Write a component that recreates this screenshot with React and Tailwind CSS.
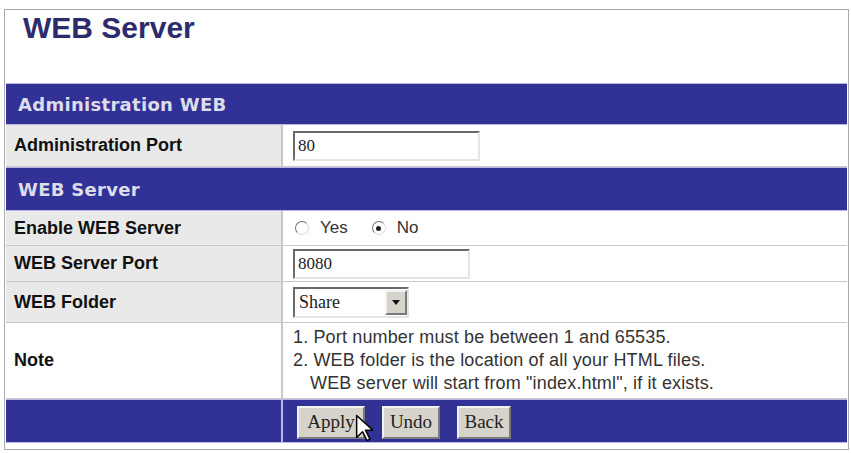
import { useState } from "react";

const sans = { fontFamily: '"Liberation Sans", Arial, sans-serif' };
const wide = { fontFamily: '"DejaVu Sans", Verdana, sans-serif' };
const serif = { fontFamily: '"Liberation Serif", "Times New Roman", serif' };

const Bar = ({ title, h }) => (
  <div
    className={`${h} bg-[#323296] border-y border-[#b8b8e0] flex items-center pl-[12px] text-[18px] font-bold text-[#dcdcea] tracking-[0.3px]`}
    style={wide}
  >
    {title}
  </div>
);

const Row = ({ label, h, white, children }) => (
  <div className={`${h} grid grid-cols-[277px_1fr] border-b border-[#c8c8c8]`}>
    <div
      className={`${white ? "bg-white" : "bg-[#e9e9e9]"} border-r-2 border-[#c8c8c8] flex items-center pl-[8px] text-[18px] font-bold text-[#111]`}
      style={sans}
    >
      {label}
    </div>
    <div className="bg-white flex items-center pl-[10px]">{children}</div>
  </div>
);

const TextBox = ({ value, w }) => (
  <div
    className={`${w} h-[30px] bg-white border-2 border-t-[#6a6a6a] border-l-[#6a6a6a] border-b-[#e4e4e4] border-r-[#e4e4e4] flex items-center pl-[3px] text-[17px] text-[#222]`}
    style={serif}
  >
    {value}
  </div>
);

const Radio = ({ checked, label }) => (
  <label className="flex items-center gap-[11px] text-[17px] text-[#333]" style={sans}>
    <span className="w-[14px] h-[14px] rounded-full border border-t-[#777] border-l-[#777] border-b-[#ddd] border-r-[#ddd] bg-white flex items-center justify-center">
      {checked && <span className="w-[5px] h-[5px] rounded-full bg-[#222]" />}
    </span>
    {label}
  </label>
);

const Btn = ({ children, w }) => (
  <button
    className={`${w} h-[33px] bg-[#d6d3cb] border-2 border-t-[#f2f2f2] border-l-[#f2f2f2] border-b-[#7a7a7a] border-r-[#7a7a7a] text-[19px] text-[#222] flex items-center justify-center`}
    style={serif}
  >
    {children}
  </button>
);

export default function App() {
  const [enabled, setEnabled] = useState(false);

  return (
    <div className="w-[851px] h-[453px] bg-white pt-[9px] pl-[4px]">
      <div className="w-[845px] h-[441px] border border-[#a8a8a8] px-[1px] flex flex-col">
        <div className="h-[73px] pl-[17px] pt-[1px]">
          <h1 className="text-[30px] font-bold text-[#2c2c6c] leading-[34px]" style={sans}>
            WEB Server
          </h1>
        </div>

        <Bar title="Administration WEB" h="h-[42px]" />
        <Row label="Administration Port" h="h-[42px]">
          <TextBox value="80" w="w-[187px]" />
        </Row>

        <Bar title="WEB Server" h="h-[44px]" />
        <Row label="Enable WEB Server" h="h-[35px]">
          <div className="flex items-center gap-[24px] pl-[2px]" onClick={() => setEnabled(!enabled)}>
            <Radio checked={enabled} label="Yes" />
            <Radio checked={!enabled} label="No" />
          </div>
        </Row>
        <Row label="WEB Server Port" h="h-[36px]">
          <TextBox value="8080" w="w-[177px]" />
        </Row>
        <Row label="WEB Folder" h="h-[41px]">
          <div className="w-[116px] h-[31px] border-2 border-t-[#6a6a6a] border-l-[#6a6a6a] border-b-[#e4e4e4] border-r-[#e4e4e4] flex items-center bg-white">
            <span className="flex-1 pl-[4px] text-[18px] text-[#222]" style={serif}>
              Share
            </span>
            <span className="w-[22px] h-[25px] bg-[#d6d3cb] border-2 border-t-[#f2f2f2] border-l-[#f2f2f2] border-b-[#7a7a7a] border-r-[#7a7a7a] flex items-center justify-center">
              <svg width="8" height="5" viewBox="0 0 8 5">
                <path d="M0 0h8L4 5z" fill="#111" />
              </svg>
            </span>
          </div>
        </Row>
        <Row label="Note" h="h-[76px]" white>
          <div className="text-[18px] leading-[23px] text-[#333] tracking-[0.15px]" style={sans}>
            <div>1. Port number must be between 1 and 65535.</div>
            <div>2. WEB folder is the location of all your HTML files.</div>
            <div className="pl-[17px]">WEB server will start from "index.html", if it exists.</div>
          </div>
        </Row>

        <div className="h-[44px] grid grid-cols-[277px_1fr] bg-[#323296] border-y border-[#b8b8e0]">
          <div className="border-r-2 border-[#b8b8e0]" />
          <div className="flex items-center gap-[17px] pl-[14px] pt-[2px]">
            <div className="relative">
              <Btn w="w-[68px]">Apply</Btn>
              <svg
                className="absolute left-[58px] top-[8px]"
                width="18"
                height="28"
                viewBox="0 0 12 19"
              >
                <path d="M1 1v15l4-4 3 6 2-1-3-6h5z" fill="#fff" stroke="#000" strokeWidth="1" strokeLinejoin="round" />
              </svg>
            </div>
            <Btn w="w-[58px]">Undo</Btn>
            <Btn w="w-[54px]">Back</Btn>
          </div>
        </div>
      </div>
    </div>
  );
}
